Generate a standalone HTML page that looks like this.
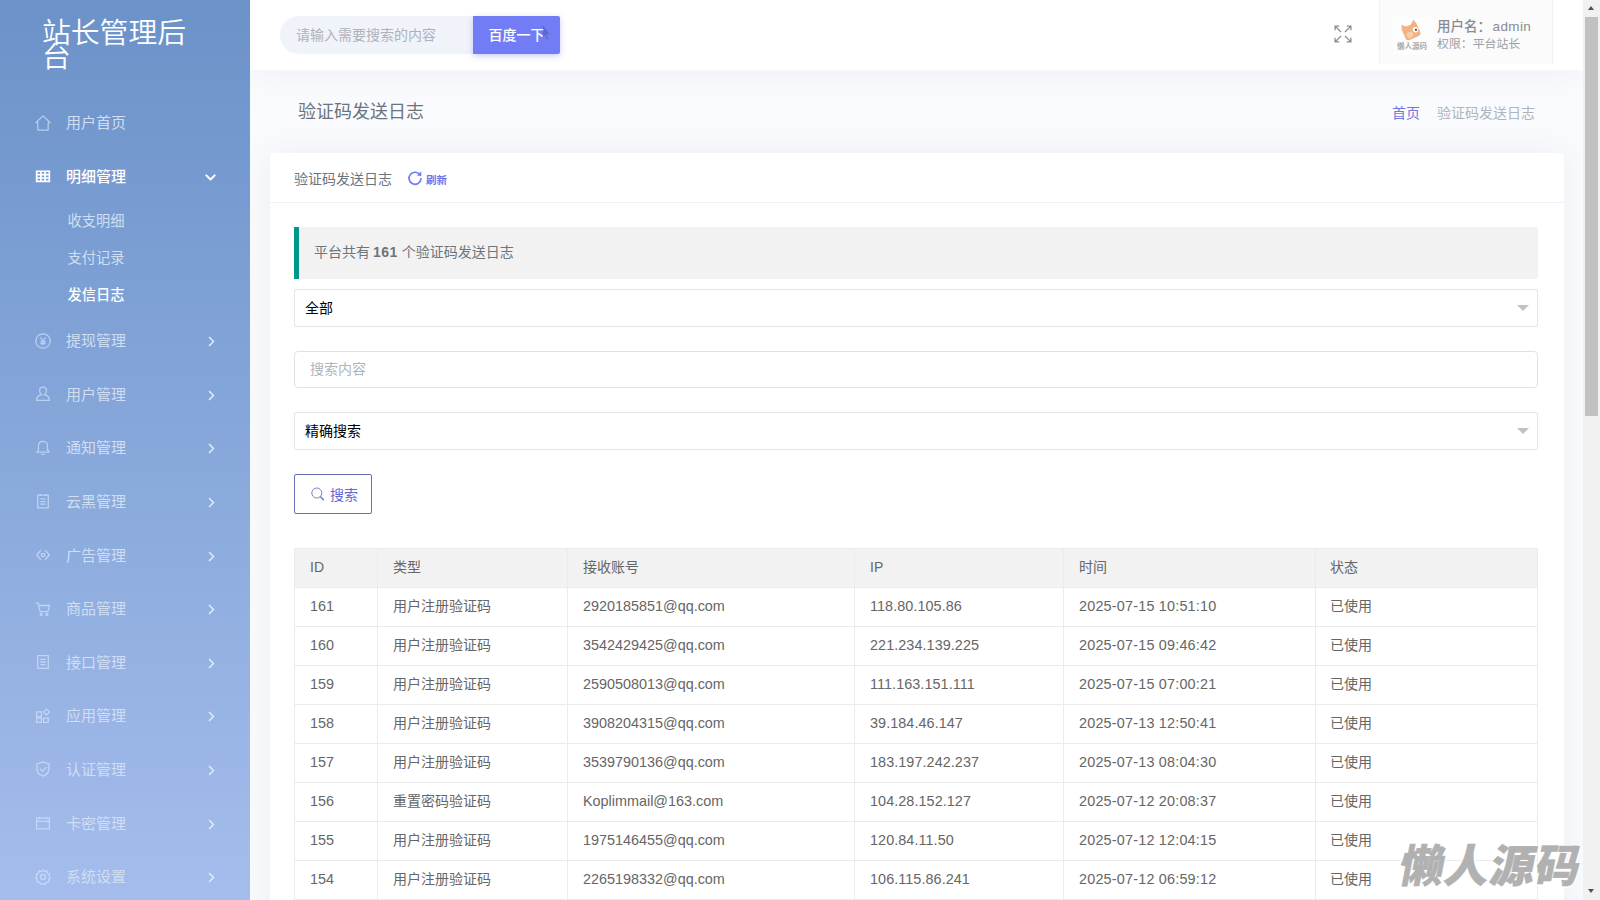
<!DOCTYPE html>
<html lang="zh-CN">
<head>
<meta charset="utf-8">
<title>验证码发送日志</title>
<style>
*{box-sizing:border-box;margin:0;padding:0}
html,body{width:1600px;height:900px;overflow:hidden}
body{font-family:"Liberation Sans","Noto Sans CJK SC",sans-serif;font-size:14px;color:#6c757d;background:#fafbfe;position:relative}
a{text-decoration:none;color:inherit}
ul{list-style:none}

/* ---------- sidebar ---------- */
#side{z-index:3;position:absolute;left:0;top:0;width:250px;height:900px;background:linear-gradient(180deg,#6b92c9 0%,#a4bdec 100%);overflow:hidden}
#logo{position:absolute;left:42px;top:20.500px;width:170px;font-size:28.8px;line-height:24px;color:#fff;font-weight:350;letter-spacing:0}
#nav{position:absolute;left:0;top:96px;width:250px}
#nav .it{position:relative;height:53.6px;color:#cfdef3;font-size:15px}
#nav .it .tx{position:absolute;left:66px;top:0;line-height:53.6px;white-space:nowrap}
#nav .it svg.ic{position:absolute;left:33.500px;top:17.500px;width:18px;height:18px;stroke:rgba(214,230,252,.68);fill:none;stroke-width:1.2}
#nav .it svg.ar{position:absolute;left:206.450px;top:22px;width:11px;height:11px;stroke:#dde8f8;fill:none;stroke-width:1.7;stroke-linecap:round;stroke-linejoin:round}
#nav .it.on{color:#fff}
#nav .it.on .tx{font-weight:500}
#nav .it.on svg.ar{stroke:#fff}
#nav .sub{height:37px;position:relative;color:#cfdef3;font-size:14.24px}
#nav .sub span{position:absolute;left:67.500px;top:0;line-height:37px}
#nav .sub.on{color:#fff}
#nav .sub.on span{font-weight:500}

/* ---------- topbar ---------- */
#top{position:absolute;left:250px;top:0;width:1333px;height:70px;background:#fff;box-shadow:0 0 35px 0 rgba(154,161,171,.15)}
#sbox{position:absolute;left:30px;top:16px;width:200px;height:38px;background:#f1f3fa;border-radius:19px 0 0 19px;padding-left:16px;line-height:38px;font-size:14px;color:#adb2bd}
#sbtn{position:absolute;left:223px;top:16px;width:87px;height:38px;background:#727cf5;color:#fff;font-size:14px;line-height:38px;text-align:center;border-radius:0 2px 2px 0;box-shadow:0 2px 6px 0 rgba(114,124,245,.38);font-weight:500}
#cur{position:absolute;left:291.500px;top:24px;width:7.500px;height:17px;fill:rgba(70,80,150,.45);stroke:none}
#fs{position:absolute;left:1082px;top:23px;width:22px;height:22px;stroke:#8a8d94;fill:none;stroke-width:1.15}
#user{position:absolute;left:1129px;top:0;width:174px;height:64px;background:#fbfbfc;border-left:1px solid #f1f2f6;border-right:1px solid #f1f2f6}
#user .av{position:absolute;left:13px;top:17px;width:38px;height:38px;border-radius:4px;background:#fdfdfe;overflow:hidden}
#user .nm{position:absolute;left:57px;top:16.500px;font-size:11.900px;line-height:15px;color:#9b9ea4;white-space:nowrap}
#user .nm b{color:#888b91;font-weight:500;font-size:13.500px;display:block;line-height:20px}
#user .nm b i{font-style:normal;letter-spacing:.4px;margin-left:1.500px}

/* ---------- page head ---------- */
#ttl{position:absolute;left:298px;top:97px;font-size:18px;line-height:30px;color:#6c757d;white-space:nowrap}
#bc{position:absolute;right:65px;top:100px;font-size:14px;line-height:26px;white-space:nowrap;color:#adb5bd}
#bc a{color:#6f79e0;margin-right:17px}

/* ---------- card ---------- */
#card{position:absolute;left:270px;top:153px;width:1294px;height:800px;background:#fff;box-shadow:0 0 35px 0 rgba(154,161,171,.15);border-radius:4px}
#chd{position:absolute;left:0;top:0;width:100%;height:50px;border-bottom:1px solid #eef2f7}
#chd .t{position:absolute;left:24px;top:15px;font-size:14px;line-height:22px;color:#6c757d;white-space:nowrap}
#chd .r{position:absolute;left:156px;top:16px;font-size:10.5px;line-height:22px;color:#6a75ee;white-space:nowrap;font-weight:700}
#chd svg{position:absolute;left:137px;top:17px;width:16px;height:16px;stroke:#727cf5;fill:none;stroke-width:1.7}
#quote b{letter-spacing:.5px;margin-left:-1px}
#quote{position:absolute;left:24px;top:74px;width:1244px;height:52px;background:#f2f2f2;border-left:5px solid #009688;border-radius:0 2px 2px 0;padding:0 15px;line-height:50px;font-size:14px;color:#6c757d}
.sel{position:absolute;left:24px;width:1244px;height:38px;border:1px solid #e6e6e6;border-radius:2px;background:#fff;padding-left:10px;line-height:36px;font-size:14px;color:#000}
.sel i{position:absolute;right:8.500px;top:15px;width:0;height:0;border:6px solid transparent;border-top-color:#c2c2c2}
#inp{position:absolute;left:24px;top:198px;width:1244px;height:37px;border:1px solid #dee2e6;border-radius:4px;padding-left:15px;line-height:35px;font-size:14px;color:#adb5bd}
#btn{position:absolute;left:24px;top:321px;width:78px;height:40px;border:1px solid #686db8;border-radius:2px;color:#5f68d8;font-size:14px;line-height:38px}
#btn svg{position:absolute;left:15px;top:11px;width:16px;height:16px;stroke:#817fc0;fill:none;stroke-width:1}
#btn span{position:absolute;left:35px;top:.5px}

/* ---------- table ---------- */
#tb{position:absolute;left:24px;top:395px;width:1244px;border-collapse:collapse;font-size:14px;color:#666;table-layout:fixed}
#tb th,#tb td{height:39px;border:1px solid #ebebeb;padding:0 15px;text-align:left;font-weight:400;white-space:nowrap;line-height:20px}
#tb th{background:#f2f2f2}
#tb th,#tb td{padding-bottom:2px}
#tb td.n,#tb td.em,#tb td.ip,#tb td.tm{font-size:14.400px}
#tb td.tm{letter-spacing:.2px}
#tb td.ip{letter-spacing:.07px}
#tb td:last-child,#tb th:last-child{padding-left:14px}

/* ---------- scrollbar ---------- */
#sb{position:absolute;left:1583px;top:0;width:17px;height:900px;background:#f1f1f1}
#sb .th{position:absolute;left:2px;top:17px;width:13px;height:399px;background:#c1c1c1}
#sb .u,#sb .d{position:absolute;left:5px;width:0;height:0;border:3.5px solid transparent}
#sb .u{top:3px;border-bottom:4px solid #505050}
#sb .d{top:889px;border-top:4px solid #505050}

/* ---------- watermark ---------- */
#wm{position:absolute;left:1400.5px;top:832.5px;font-family:"Noto Sans CJK SC","Liberation Sans",sans-serif;font-weight:900;font-size:44.500px;line-height:60px;color:#b1b1b1;white-space:nowrap;transform:skewX(-11deg);transform-origin:50% 50%;-webkit-text-stroke:.5px #b1b1b1;letter-spacing:.8px;text-shadow:1.5px 0 0 #fff,-1.5px 0 0 #fff,0 1.5px 0 #fff,0 -1.5px 0 #fff,1px 1px 0 #fff,-1px -1px 0 #fff,1px -1px 0 #fff,-1px 1px 0 #fff}
</style>
</head>
<body>

<div id="side">
  <div id="logo">站长管理后台</div>
  <div id="nav">
    <div class="it"><svg class="ic" viewBox="0 0 17 17"><path d="M8.500 1.800L15.300 8.200H13.400V15.200H3.600V8.200H1.700Z" stroke-linejoin="round"/></svg><span class="tx">用户首页</span></div>
    <div class="it on"><svg class="ic" viewBox="0 0 17 17" style="stroke:#fff;stroke-width:1.6"><path d="M2.5 4h12v9.5h-12zM2.500 7.200h12M2.500 10.400h12M6.500 4v9.500M10.500 4v9.500"/></svg><span class="tx">明细管理</span><svg class="ar" viewBox="0 0 11 11" style="left:205.350px;top:22.200px;stroke-width:2"><path d="M1.350 3.400l4.150 4.150l4.150-4.150"/></svg></div>
    <div class="sub"><span>收支明细</span></div>
    <div class="sub"><span>支付记录</span></div>
    <div class="sub on"><span>发信日志</span></div>
    <div class="it"><svg class="ic" viewBox="0 0 17 17"><circle cx="8.500" cy="8.500" r="6.800"/><path d="M6 5l2.500 3.500L11 5M8.500 8.500v4M6 9.200h5M6 11h5"/></svg><span class="tx">提现管理</span><svg class="ar" viewBox="0 0 11 11"><path d="M3.500 1.500l4 4l-4 4"/></svg></div>
    <div class="it"><svg class="ic" viewBox="0 0 17 17"><path d="M8.500 2c2 0 3.200 1.500 3.200 3.500c0 1.600-.8 3-1.800 3.700c2.600.6 4.600 2.400 4.600 5.300h-12c0-2.900 2-4.700 4.600-5.300c-1-.7-1.800-2.100-1.800-3.700c0-2 1.200-3.500 3.200-3.500z"/></svg><span class="tx">用户管理</span><svg class="ar" viewBox="0 0 11 11"><path d="M3.500 1.500l4 4l-4 4"/></svg></div>
    <div class="it"><svg class="ic" viewBox="0 0 17 17"><path d="M8.500 2.200c-2.800 0-4.300 2-4.300 4.600v3.400l-1.400 2.300h11.400l-1.400-2.300v-3.400c0-2.600-1.500-4.600-4.300-4.600zM7 14.500h3"/></svg><span class="tx">通知管理</span><svg class="ar" viewBox="0 0 11 11"><path d="M3.500 1.500l4 4l-4 4"/></svg></div>
    <div class="it"><svg class="ic" viewBox="0 0 17 17"><path d="M3.500 3h10v12h-10zM6 6.500h5M6 9h5M6 11.500h5M6 1.800v2M11 1.800v2"/></svg><span class="tx">云黑管理</span><svg class="ar" viewBox="0 0 11 11"><path d="M3.500 1.500l4 4l-4 4"/></svg></div>
    <div class="it"><svg class="ic" viewBox="0 0 17 17"><path d="M6.500 4L2.500 8.500L6.500 13M10.500 4l4 4.500l-4 4.500"/><circle cx="8.500" cy="8.500" r="1.600"/></svg><span class="tx">广告管理</span><svg class="ar" viewBox="0 0 11 11"><path d="M3.500 1.500l4 4l-4 4"/></svg></div>
    <div class="it"><svg class="ic" viewBox="0 0 17 17"><path d="M1.500 3h2.300l2 8h7.400l1.500-5.800H4.500"/><circle cx="6.800" cy="13.600" r="1"/><circle cx="12.200" cy="13.600" r="1"/></svg><span class="tx">商品管理</span><svg class="ar" viewBox="0 0 11 11"><path d="M3.500 1.500l4 4l-4 4"/></svg></div>
    <div class="it"><svg class="ic" viewBox="0 0 17 17"><path d="M3.500 2.500h10v12h-10zM6 6h5M6 8.500h5M6 11h5"/></svg><span class="tx">接口管理</span><svg class="ar" viewBox="0 0 11 11"><path d="M3.500 1.500l4 4l-4 4"/></svg></div>
    <div class="it"><svg class="ic" viewBox="0 0 17 17"><path d="M2.500 4.500h4.500v4.500h-4.500zM2.500 10.500h4.500v4h-4.500zM9 10.500h4.500v4h-4.500zM11.800 2l2.800 2.800l-2.800 2.800l-2.800-2.800z"/></svg><span class="tx">应用管理</span><svg class="ar" viewBox="0 0 11 11"><path d="M3.500 1.500l4 4l-4 4"/></svg></div>
    <div class="it"><svg class="ic" viewBox="0 0 17 17"><path d="M8.500 1.800l5.700 2v4.700c0 3.300-2.400 5.500-5.700 6.700c-3.300-1.200-5.700-3.400-5.700-6.700V3.800zM5.800 8.300l2.200 2.200l3.600-3.800"/></svg><span class="tx">认证管理</span><svg class="ar" viewBox="0 0 11 11"><path d="M3.500 1.500l4 4l-4 4"/></svg></div>
    <div class="it"><svg class="ic" viewBox="0 0 17 17"><path d="M2.500 4h12v10h-12zM2.500 7h12M5.500 2.500v2.500M11.500 2.500v2.500"/></svg><span class="tx">卡密管理</span><svg class="ar" viewBox="0 0 11 11"><path d="M3.500 1.500l4 4l-4 4"/></svg></div>
    <div class="it"><svg class="ic" viewBox="0 0 17 17"><circle cx="8.500" cy="8.500" r="2.400"/><path d="M8.500 1.800l1.500 1.500l2.100-.4l.7 2l2 .8l-.5 2.100l1 1.700l-1.500 1.500l.1 2.100l-2.100.5l-1.100 1.800l-2.200-.7l-2.200.7l-1.100-1.800l-2.100-.5l.1-2.100L1.700 9.500l1-1.700l-.5-2.100l2-.8l.7-2l2.100.4z"/></svg><span class="tx">系统设置</span><svg class="ar" viewBox="0 0 11 11"><path d="M3.500 1.500l4 4l-4 4"/></svg></div>
  </div>
</div>

<div id="top">
  <div id="sbox">请输入需要搜索的内容</div>
  <div id="sbtn">百度一下</div>
  <svg id="cur" viewBox="0 0 10 18" preserveAspectRatio="none"><path d="M1 1v13.500l3-3l2.200 5l2-.9l-2.200-4.800h4z"/></svg>
  <svg id="fs" viewBox="0 0 20 20"><path d="M2.800 6.600V2.800h3.800M2.800 2.800l5.400 5.400M13.400 2.800H17.200v3.800M17.200 2.800l-5.400 5.400M2.800 13.400V17.200h3.800M2.800 17.200l5.400-5.400M17.200 13.400V17.200h-3.800M17.200 17.200l-5.400-5.400"/></svg>
  <div id="user">
    <div class="av"><svg viewBox="0 0 38 38" width="38" height="38"><g transform="translate(.5,1) rotate(-24 18 14)"><path d="M10 8l1.500-4.500l4 3.500h5l4-3.500l1.500 4.500v9.500q0 3-3 3h-10q-3 0-3-3z" fill="#f3b283"/><path d="M12 14q4-3 7 1q-1 5-6 4z" fill="#f8cfae"/><circle cx="22.500" cy="13.500" r="2.700" fill="#fff"/><circle cx="23" cy="13.800" r="1.100" fill="#54423a"/></g><text x="19" y="32" font-size="7.500" text-anchor="middle" fill="#aaa" font-family="'Liberation Sans','Noto Sans CJK SC',sans-serif" font-weight="700">懒人源码</text></svg></div>
    <div class="nm"><b>用户名：<i>admin</i></b>权限：平台站长</div>
  </div>
</div>

<div id="ttl">验证码发送日志</div>
<div id="bc"><a>首页</a>验证码发送日志</div>

<div id="card">
  <div id="chd">
    <span class="t">验证码发送日志</span>
    <svg viewBox="0 0 16 16"><path d="M13.200 5.200A6 6 0 1 0 14 8.800" stroke-linecap="round"/><path d="M14.300 1.300v4.400h-4.400z" fill="#727cf5" stroke="none"/></svg>
    <span class="r">刷新</span>
  </div>
  <div id="quote">平台共有 <b>161</b> 个验证码发送日志</div>
  <div class="sel" style="top:136px">全部<i></i></div>
  <div id="inp">搜索内容</div>
  <div class="sel" style="top:259px">精确搜索<i></i></div>
  <div id="btn"><svg viewBox="0 0 16 16"><circle cx="6.800" cy="7" r="5"/><path d="M10.500 10.800l2.800 2.800" stroke-linecap="round" stroke-width="1.600"/></svg><span>搜索</span></div>

  <table id="tb">
    <colgroup><col style="width:83px"><col style="width:190px"><col style="width:287px"><col style="width:209px"><col style="width:252px"><col></colgroup>
    <tr><th>ID</th><th>类型</th><th>接收账号</th><th>IP</th><th>时间</th><th>状态</th></tr>
    <tr><td class="n">161</td><td>用户注册验证码</td><td class="em">2920185851@qq.com</td><td class="ip">118.80.105.86</td><td class="tm">2025-07-15 10:51:10</td><td>已使用</td></tr>
    <tr><td class="n">160</td><td>用户注册验证码</td><td class="em">3542429425@qq.com</td><td class="ip">221.234.139.225</td><td class="tm">2025-07-15 09:46:42</td><td>已使用</td></tr>
    <tr><td class="n">159</td><td>用户注册验证码</td><td class="em">2590508013@qq.com</td><td class="ip">111.163.151.111</td><td class="tm">2025-07-15 07:00:21</td><td>已使用</td></tr>
    <tr><td class="n">158</td><td>用户注册验证码</td><td class="em">3908204315@qq.com</td><td class="ip">39.184.46.147</td><td class="tm">2025-07-13 12:50:41</td><td>已使用</td></tr>
    <tr><td class="n">157</td><td>用户注册验证码</td><td class="em">3539790136@qq.com</td><td class="ip">183.197.242.237</td><td class="tm">2025-07-13 08:04:30</td><td>已使用</td></tr>
    <tr><td class="n">156</td><td>重置密码验证码</td><td class="em">Koplimmail@163.com</td><td class="ip">104.28.152.127</td><td class="tm">2025-07-12 20:08:37</td><td>已使用</td></tr>
    <tr><td class="n">155</td><td>用户注册验证码</td><td class="em">1975146455@qq.com</td><td class="ip">120.84.11.50</td><td class="tm">2025-07-12 12:04:15</td><td>已使用</td></tr>
    <tr><td class="n">154</td><td>用户注册验证码</td><td class="em">2265198332@qq.com</td><td class="ip">106.115.86.241</td><td class="tm">2025-07-12 06:59:12</td><td>已使用</td></tr>
    <tr><td class="n">153</td><td>用户注册验证码</td><td class="em">1830254417@qq.com</td><td class="ip">112.96.54.18</td><td class="tm">2025-07-11 21:15:03</td><td>已使用</td></tr>
  </table>
</div>

<div id="sb"><div class="u"></div><div class="th"></div><div class="d"></div></div>
<div id="wm">懒人源码</div>

</body>
</html>
